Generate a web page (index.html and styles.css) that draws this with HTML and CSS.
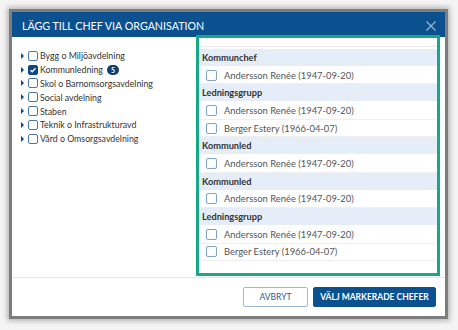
FILE: index.html
```html
<!DOCTYPE html>
<html lang="sv">
<head>
<meta charset="utf-8">
<title>Lägg till chef via organisation</title>
<link rel="stylesheet" href="styles.css">
</head>
<body>
<div class="backdrop">
  <div class="dialog">
    <div class="dialog-header">
      <h1 class="dialog-title">LÄGG TILL CHEF VIA ORGANISATION</h1>
      <button class="close" aria-label="Stäng">
        <svg width="10" height="10" viewBox="0 0 10 10"><path d="M0.5 0.5 L9.5 9.5 M9.5 0.5 L0.5 9.5" stroke="currentColor" stroke-width="1.2" fill="none"/></svg>
      </button>
    </div>
    <div class="dialog-body">
      <ul class="tree">
        <li class="tree-item"><span class="caret"></span><span class="cb"></span><span class="label">Bygg o Miljöavdelning</span></li>
        <li class="tree-item"><span class="caret"></span><span class="cb checked"><svg width="8" height="8" viewBox="0 0 8 8"><path d="M1.5 4.2 L3.2 5.8 L6.5 2.2" stroke="#fff" stroke-width="1.3" fill="none"/></svg></span><span class="label">Kommunledning</span><span class="badge">5</span></li>
        <li class="tree-item"><span class="caret"></span><span class="cb"></span><span class="label">Skol o Barnomsorgsavdelning</span></li>
        <li class="tree-item"><span class="caret"></span><span class="cb"></span><span class="label">Social avdelning</span></li>
        <li class="tree-item"><span class="caret"></span><span class="cb"></span><span class="label">Staben</span></li>
        <li class="tree-item"><span class="caret"></span><span class="cb"></span><span class="label">Teknik o Infrastrukturavd</span></li>
        <li class="tree-item"><span class="caret"></span><span class="cb"></span><span class="label">Vård o Omsorgsavdelning</span></li>
      </ul>
      <div class="picker">
        <div class="list">
          <div class="group">Kommunchef</div>
          <div class="person"><span class="pcb"></span>Andersson Renée (1947-09-20)</div>
          <div class="group">Ledningsgrupp</div>
          <div class="person"><span class="pcb"></span>Andersson Renée (1947-09-20)</div>
          <div class="person"><span class="pcb"></span>Berger Estery (1966-04-07)</div>
          <div class="group">Kommunled</div>
          <div class="person"><span class="pcb"></span>Andersson Renée (1947-09-20)</div>
          <div class="group">Kommunled</div>
          <div class="person"><span class="pcb"></span>Andersson Renée (1947-09-20)</div>
          <div class="group">Ledningsgrupp</div>
          <div class="person"><span class="pcb"></span>Andersson Renée (1947-09-20)</div>
          <div class="person"><span class="pcb"></span>Berger Estery (1966-04-07)</div>
        </div>
      </div>
    </div>
    <div class="dialog-footer">
      <button class="btn btn-secondary">AVBRYT</button>
      <button class="btn btn-primary">VÄLJ MARKERADE CHEFER</button>
    </div>
  </div>
</div>
</body>
</html>
```
FILE: styles.css
```css
* { box-sizing: border-box; }
html, body { margin: 0; padding: 0; }
body {
  width: 458px;
  height: 330px;
  background: #f4f4f4;
  font-family: Lato, "Open Sans", sans-serif;
  overflow: hidden;
}
.backdrop {
  padding: 9px 10px 0 9px;
}
.dialog {
  width: 439px;
  height: 310px;
  border: 3px solid #7d7d7d;
  background: #fff;
  box-shadow: 0 0 5px 2px rgba(0,0,0,0.25);
  display: flex;
  flex-direction: column;
}
.dialog-header {
  height: 25px;
  background: #0b5190;
  display: flex;
  align-items: center;
  justify-content: space-between;
  padding: 2px 9px 0 10px;
  flex: none;
}
.dialog-title {
  margin: 0;
  color: #fff;
  font-size: 10.7px;
  font-weight: 400;
  letter-spacing: 0;
}
.close {
  background: none;
  border: 0;
  padding: 0;
  color: #9fb6cf;
  display: flex;
}
.dialog-body {
  flex: 1;
  display: flex;
  min-height: 0;
}
.tree {
  list-style: none;
  margin: 0;
  padding: 12px 0 0 9px;
  flex: 1;
}
.tree-item {
  height: 13.8px;
  display: flex;
  align-items: center;
  font-size: 8.8px;
  color: #333;
}
.caret {
  width: 0;
  height: 0;
  border-left: 3px solid #0b4a86;
  border-top: 3px solid transparent;
  border-bottom: 3px solid transparent;
  margin-right: 4px;
}
.cb {
  width: 10px;
  height: 10px;
  border: 1px solid #4e77a5;
  border-radius: 2px;
  background: #fff;
  margin-right: 2px;
  display: flex;
  align-items: center;
  justify-content: center;
}
.cb.checked {
  background: #0b4a86;
  border-color: #0b4a86;
}
.badge {
  margin-left: 4px;
  width: 12px;
  height: 10px;
  border-radius: 5px;
  background: #0d3f73;
  color: #fff;
  font-size: 7px;
  font-weight: 700;
  display: flex;
  align-items: center;
  justify-content: center;
}
.picker {
  width: 244px;
  margin: -2px 5px 1px 0;
  border: 3px solid #16a888;
  padding: 8px 0 0 0;
  display: flex;
  flex-direction: column;
}
.list {
  border-top: 1px solid #ececec;
  padding-top: 2px;
  flex: 1;
}
.group {
  height: 17.7px;
  background: #e5eef8;
  font-size: 9.2px;
  font-weight: 700;
  color: #333;
  display: flex;
  align-items: center;
  padding-left: 3px;
  border-bottom: 1px solid #fff;
}
.person {
  height: 17.7px;
  display: flex;
  align-items: center;
  font-size: 9.4px;
  color: #555;
  padding-left: 7px;
  border-bottom: 1px solid #efefef;
}
.pcb {
  width: 11px;
  height: 11px;
  border: 1px solid #7aa3cf;
  border-radius: 2px;
  margin-right: 7px;
}
.dialog-footer {
  flex: none;
  height: 39px;
  border-top: 1px solid #e8e8e8;
  display: flex;
  justify-content: flex-end;
  align-items: center;
  gap: 5px;
  padding: 0 9px 0 0;
}
.btn {
  height: 20px;
  font-family: Lato, sans-serif;
  font-size: 8.5px;
  border-radius: 2px;
  padding: 0;
  white-space: nowrap;
}
.btn-secondary {
  width: 65px;
  background: #fff;
  color: #2c5d8f;
  border: 1px solid #9dbad8;
}
.btn-primary {
  width: 123px;
  background: #0b5190;
  color: #fff;
  border: 1px solid #0b5190;
  font-weight: 700;
}
```
